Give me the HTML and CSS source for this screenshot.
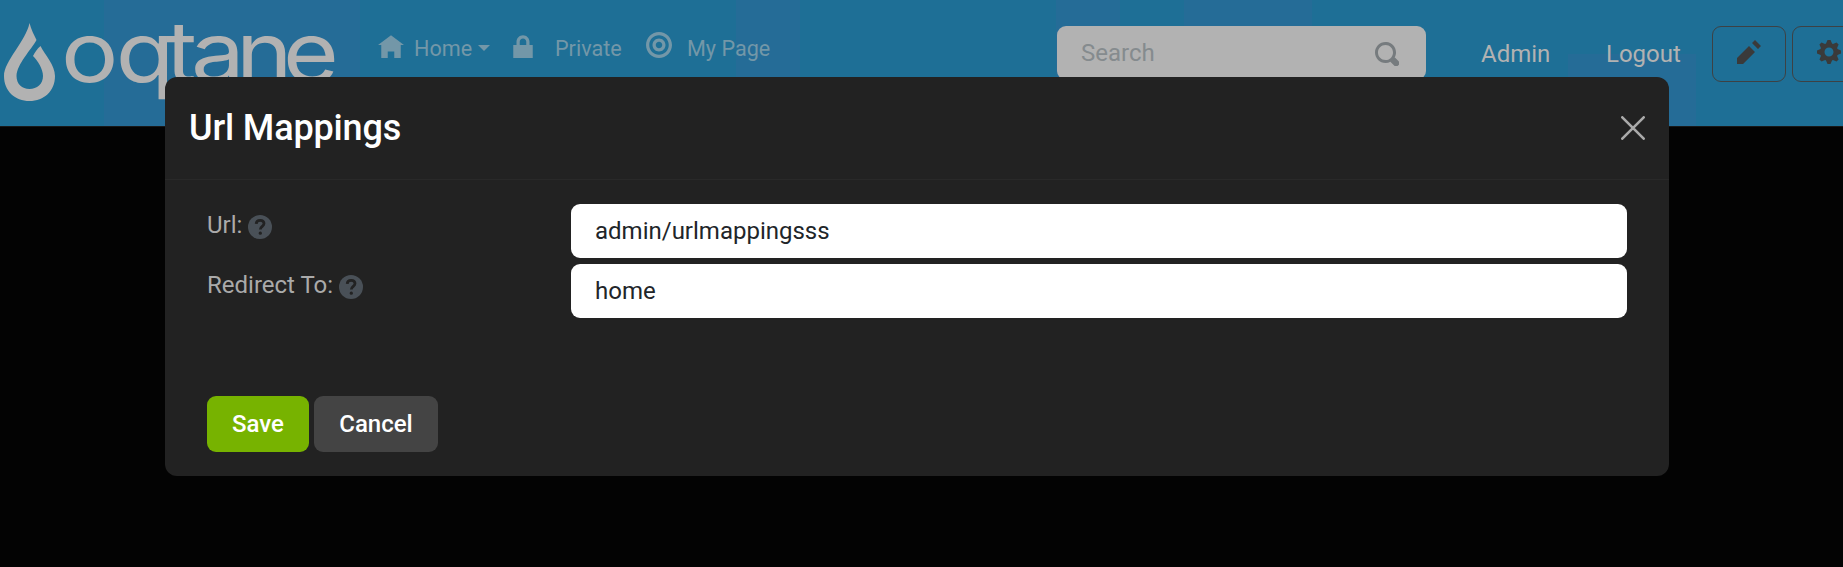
FILE: index.html
```
<!DOCTYPE html>
<html lang="en">
<head>
<meta charset="utf-8">
<title>Url Mappings</title>
<link rel="stylesheet" href="styles.css">
</head>
<body>
<header class="topbar">
  <svg class="logo" width="345" height="126" viewBox="0 0 345 126" role="img" aria-label="oqtane">
    <path class="logo-drop" d="M29.500 23C31 29 34 35 36.500 40C31 50 17 64 16.500 76C16.500 84 22 89 29.500 89C37 89 43 84 43 76C43 69 38 61 33 56C35 52 37 49 40.500 46C45 55 55 65 55 76C55 91 44 101 29.500 101C15 101 4 91 4 76C4 61 26 41 29.500 23Z"/>
    <text class="logo-text" transform="scale(1.140 1)" y="82" x="53.500 101.500 145.500 167.500 207 248.300">oqtane</text>
  </svg>
  <nav class="menu">
    <a class="menu-item home"><svg class="icon" viewBox="0 0 8 8"><path d="M4 1l-4 3h1v4h2v-2h2v2h2v-4h1l-4-3z"/></svg><span>Home</span><i class="caret"></i></a>
    <a class="menu-item private"><svg class="icon" viewBox="0 0 8 8"><path d="M4 1c-1.100 0-2 .9-2 2v1h-1v4h6v-4h-1v-1c0-1.100-.9-2-2-2zm0 1c.56 0 1 .44 1 1v1h-2v-1c0-.56.44-1 1-1z"/></svg><span>Private</span></a>
    <a class="menu-item page"><svg class="icon" viewBox="0 0 8 8"><path d="M4 0c-2.200 0-4 1.800-4 4s1.800 4 4 4 4-1.800 4-4-1.800-4-4-4zm0 1c1.660 0 3 1.340 3 3s-1.340 3-3 3-3-1.340-3-3 1.340-3 3-3zm0 1c-1.100 0-2 .9-2 2s.9 2 2 2 2-.9 2-2-.9-2-2-2zm0 1c.56 0 1 .44 1 1s-.44 1-1 1-1-.44-1-1 .44-1 1-1z"/></svg><span>My Page</span></a>
  </nav>
  <div class="controls">
    <div class="search"><span>Search</span><svg class="icon-sm" viewBox="0 0 8 8"><path d="M3.500 0c-1.930 0-3.500 1.570-3.500 3.500s1.570 3.500 3.500 3.500c.59 0 1.170-.14 1.660-.41a1 1 0 0 0 .13.13l1 1a1.020 1.020 0 1 0 1.440-1.440l-1-1a1 1 0 0 0-.16-.13c.27-.49.44-1.060.44-1.660 0-1.930-1.550-3.500-3.500-3.500zm0 1c1.390 0 2.500 1.110 2.500 2.500 0 .66-.24 1.270-.66 1.720a1 1 0 0 0-.16.16c-.44.4-1.040.63-1.690.63-1.390 0-2.500-1.110-2.500-2.500s1.110-2.500 2.500-2.500z"/></svg></div>
    <a class="link admin">Admin</a>
    <a class="link logout">Logout</a>
    <button class="tool"><svg class="icon-sm" viewBox="0 0 8 8"><path d="M6 0l-1 1 2 2 1-1-2-2zm-2 2l-4 4v2h2l4-4-2-2z"/></svg></button>
    <button class="tool"><svg class="icon-sm" viewBox="0 0 8 8"><path d="M3.500 0l-.5 1.190-.31.13-1.190-.5-.69.690.5 1.190-.13.310-1.180.490v1l1.190.5.130.310-.5 1.190.690.690 1.190-.5.310.130.5 1.190h1l.5-1.190.310-.130 1.190.5.690-.690-.5-1.190.130-.310 1.190-.5v-1l-1.190-.5-.130-.310.5-1.190-.690-.690-1.190.5-.310-.130-.5-1.190h-1zm.5 2.500c.83 0 1.500.670 1.500 1.500s-.670 1.500-1.500 1.500-1.500-.670-1.500-1.500.670-1.500 1.500-1.500z"/></svg></button>
  </div>
</header>
<div class="overlay">
  <section class="modal" role="dialog" aria-label="Url Mappings">
    <div class="modal-header">
      <h1 class="modal-title">Url Mappings</h1>
      <svg class="close" viewBox="0 0 24 24"><path d="M1.300 1.300L22.700 22.700M22.700 1.300L1.300 22.700"/></svg>
    </div>
    <div class="modal-body">
      <div class="row"><label class="label">Url: <svg class="help" viewBox="0 0 24 24"><circle cx="12" cy="12" r="12"/><path d="M8.200 8.900C8.300 6.500 9.800 5.300 12.100 5.300C14.500 5.300 16 6.600 16 8.600C16 11.300 12.300 11.400 12.300 14.500"/><rect x="10.700" y="16.500" width="3.200" height="3.200" rx="1.500"/></svg></label><input class="field" value="admin/urlmappingsss"></div>
      <div class="row"><label class="label">Redirect To: <svg class="help" viewBox="0 0 24 24"><circle cx="12" cy="12" r="12"/><path d="M8.200 8.900C8.300 6.500 9.800 5.300 12.100 5.300C14.500 5.300 16 6.600 16 8.600C16 11.300 12.300 11.400 12.300 14.500"/><rect x="10.700" y="16.500" width="3.200" height="3.200" rx="1.500"/></svg></label><input class="field" value="home"></div>
      <div class="actions"><button class="btn save">Save</button><button class="btn cancel">Cancel</button></div>
    </div>
  </section>
</div>
</body>
</html>
```
FILE: styles.css
```
* { box-sizing: border-box; }
body {
  margin: 0;
  height: 567px;
  overflow: hidden;
  background: #030303;
  font: 24px/36px Roboto, sans-serif;
}
.topbar {
  display: flex;
  align-items: flex-start;
  height: 127px;
  overflow: hidden;
  border-bottom: 1px solid #181818;
  background:
    linear-gradient(#256c97, #256c97) 104px 0 / 256px 126px no-repeat,
    linear-gradient(#256c97, #256c97) 736px 0 / 64px 126px no-repeat,
    linear-gradient(#256c97, #256c97) 1056px 0 / 64px 126px no-repeat,
    linear-gradient(#256c97, #256c97) 1184px 0 / 128px 126px no-repeat,
    linear-gradient(#256c97, #256c97) 1568px 54px / 128px 72px no-repeat,
    #1e6f96;
}
.logo { flex: none; }
.logo-drop, .logo-text { fill: #b2b2b2; }
.logo-text { font: 400 84px Inter, sans-serif; }
.menu {
  display: flex;
  flex: none;
  width: 712px;
  padding: 32px 0 0 33px;
  color: #7397a8;
  font-size: 21.6px;
  line-height: 32px;
}
.menu-item { display: flex; flex: none; }
.menu-item span { padding-top: 1px; }
.menu-item.home { width: 132px; }
.menu-item.private { width: 136px; }
.icon { width: 26px; height: 26px; fill: currentColor; }
.home span { margin-left: 10px; }
.private span { margin-left: 19px; }
.page span { margin-left: 15px; }
.caret {
  width: 0;
  height: 0;
  margin: 13px 0 0 6px;
  border: 6px solid transparent;
  border-top-color: currentColor;
  border-bottom: 0;
}
.controls { display: flex; flex: none; padding-top: 26px; color: #b2b2b2; }
.icon-sm { width: 24px; height: 24px; fill: currentColor; }
.search {
  display: flex;
  align-items: flex-start;
  justify-content: space-between;
  width: 369px;
  height: 54px;
  padding: 9px 27px 0 24px;
  border-radius: 9px;
  background: #b2b2b2;
  color: #858b8e;
}
.search .icon-sm { margin-top: 7px; color: #767b7e; }
.link { padding-top: 10px; }
.admin { width: 125px; margin-left: 55px; }
.logout { width: 106px; }
.tool {
  width: 74px;
  height: 56px;
  flex: none;
  margin-right: 6px;
  padding: 14px 0 0 24px;
  display: flex;
  align-items: flex-start;
  border: 1px solid #3d4144;
  border-radius: 9px;
  background: none;
  color: #3a3a3a;
}
.tool .icon-sm { margin-top: -1px; }
.overlay { position: absolute; inset: 0; padding: 77px 174px 0 165px; }
.modal { height: 399px; border-radius: 12px; background: #222; }
.modal-header {
  display: flex;
  align-items: center;
  justify-content: space-between;
  height: 103px;
  padding: 0 24px;
  border-bottom: 1px solid #292929;
}
.modal-title { margin: 0; color: #fff; font-size: 36px; font-weight: 500; line-height: 54px; letter-spacing: -0.15px; }
.close { width: 24px; height: 24px; fill: none; stroke: #aaa; stroke-width: 2.600; stroke-linecap: round; }
.modal-body { padding: 24px 42px; }
.row { display: grid; grid-template-columns: 364px 1056px; height: 54px; margin-bottom: 6px; }
.label { display: flex; gap: 6px; padding-top: 3px; color: #aaa; }
.help { width: 24px; height: 24px; margin-top: 8px; fill: #495057; }
.help path { fill: none; stroke: #222; stroke-width: 2.800; }
.help rect { fill: #222; }
.field {
  width: 1056px;
  height: 54px;
  padding: 0 24px;
  border: 0;
  border-radius: 9px;
  background: #fff;
  color: #212529;
  font: inherit;
}
.actions { display: flex; gap: 5px; padding-top: 72px; }
.btn {
  height: 56px;
  padding: 0;
  border: 0;
  border-radius: 9px;
  color: #fff;
  font: 500 24px/36px Roboto, sans-serif;
}
.save { width: 102px; background: #77b300; }
.cancel { width: 124px; background: #444; }
```
